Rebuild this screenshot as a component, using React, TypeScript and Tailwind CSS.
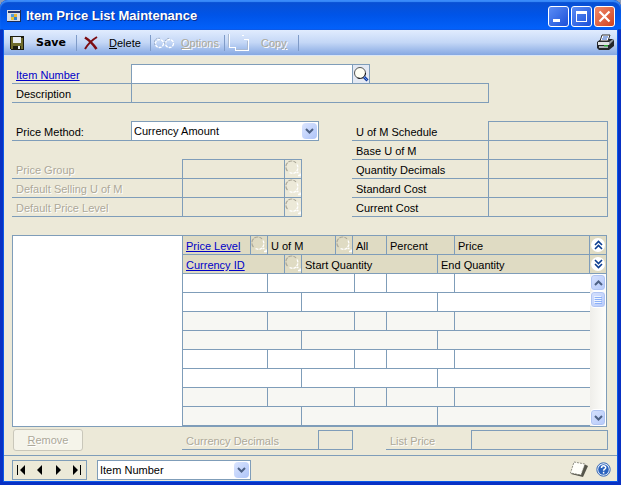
import React, { useState } from "react";

const line = "border-[#7f9db9]";

function Lens({ disabled = false }: { disabled?: boolean }) {
  return (
    <svg width="16" height="18" viewBox="0 0 16 18" fill="none" aria-hidden="true">
      {disabled ? (
        <>
          <path d="M12 4.500A6 6 0 0 1 8 13.500L4 12.500" stroke="#fff" strokeWidth="1.300" strokeDasharray="3 1" />
          <path d="M2.500 11A5.500 5.500 0 0 1 11 2.800" stroke="#aca899" strokeWidth="1.200" strokeDasharray="4 1" />
          <path d="M11.500 12.500h2M13 15.500h3M15.200 13.500v2" stroke="#fff" strokeWidth="1.500" />
        </>
      ) : (
        <>
          <circle cx="7" cy="8" r="5.500" fill="#fffff4" stroke="#555" strokeWidth="1" />
          <path d="M12.500 8A5.500 5.500 0 0 1 4 12.500" stroke="#111" strokeDasharray="3 1" />
          <path d="M11 12l3.500 3.500" stroke="#123c9c" strokeWidth="3" />
          <path d="M11 12l3 3" stroke="#5d93ef" strokeWidth="1" />
        </>
      )}
    </svg>
  );
}

function LensButton({ label, disabled = false }: { label: string; disabled?: boolean }) {
  return (
    <button type="button" aria-label={label} disabled={disabled} className={`flex h-full w-4 shrink-0 items-center justify-center ${disabled ? "" : "bg-[#e4e9f3]"}`}>
      <Lens disabled={disabled} />
    </button>
  );
}

function DropDown({ id, label, options, className }: { id: string; label: string; options: string[]; className: string }) {
  return (
    <div className={`relative h-5 border bg-white ${line} ${className}`}>
      <select id={id} aria-label={label} className="block h-[18px] w-full appearance-none bg-transparent pr-5 pl-0.5 text-black outline-none">
        {options.map((o) => (
          <option key={o}>{o}</option>
        ))}
      </select>
      <span className="pointer-events-none absolute top-px right-px flex h-4 w-[15px] items-center justify-center rounded-sm bg-linear-to-br from-[#dbe5fe] to-[#aec4f8]">
        <svg width="9" height="6" viewBox="0 0 9 6" fill="none" aria-hidden="true">
          <path d="M1 1l3.500 3.500L8 1" stroke="#4d6185" strokeWidth="2" />
        </svg>
      </span>
    </div>
  );
}

const emboss = "text-[#aca899] [text-shadow:1px_1px_0_#fff]";

function Divider() {
  return <span className="h-4 w-px shrink-0 bg-[#7f9bc8]" />;
}

function Toolbar() {
  return (
    <div className="flex h-[26px] items-center border-b border-[#dbe6f4] bg-linear-to-b from-[#e1ecfe] via-[#c4d7f6] to-[#86a8e2]">
      <button type="button" className="flex h-6 w-[72px] items-center gap-3 pl-1.5 font-['DejaVu_Sans',sans-serif] text-[11px] font-bold">
        <svg width="14" height="14" viewBox="0 0 14 14" shapeRendering="crispEdges" aria-hidden="true">
          <path d="M0 0h14v14H1l-1-1z" fill="#1c1c10" />
          <path d="M1 1h2v12H1zM11 2h2v11h-2zM2 7h10v3H2z" fill="#6f6c2c" />
          <path d="M3 1h8v6H3z" fill="#e8edf4" />
          <path d="M3 10h8v4H3z" fill="#1c1c10" />
          <path d="M8 10h2v3H8z" fill="#e8edf4" />
        </svg>
        Save
      </button>
      <Divider />
      <button type="button" className="flex h-6 w-[73px] items-center gap-[11px] pl-[7px]">
        <svg width="14" height="14" viewBox="0 0 14 14" fill="none" aria-hidden="true">
          <path d="M1 1.500C5 4 9 8 12.500 13" stroke="#7d0d12" strokeWidth="2.600" />
          <path d="M13 1C8 4 4 8 1 13" stroke="#7d0d12" strokeWidth="2" />
        </svg>
        <span><u>D</u>elete</span>
      </button>
      <Divider />
      <button type="button" disabled className={`flex h-6 w-[73px] items-center gap-1.5 pl-[3px] ${emboss}`}>
        <svg width="21" height="12" viewBox="0 0 21 12" fill="none" aria-hidden="true">
          <circle cx="5.500" cy="6.500" r="4" stroke="#fff" strokeWidth="1.300" strokeDasharray="3 1" />
          <circle cx="15.500" cy="6.500" r="4" stroke="#fff" strokeWidth="1.300" strokeDasharray="3 1" />
          <path d="M1 8A4.300 4.300 0 0 1 6 1.500M11 7A4.300 4.300 0 0 1 16 1.500" stroke="#9aabc4" strokeDasharray="2 1" />
        </svg>
        <span><u>O</u>ptions</span>
      </button>
      <Divider />
      <button type="button" disabled className={`flex h-6 w-[73px] items-center gap-3 pl-[3px] ${emboss}`}>
        <svg width="21" height="18" viewBox="0 0 21 18" fill="none" shapeRendering="crispEdges" aria-hidden="true">
          <path d="M1.500 0v14M1 13.500h6M7.500 13v4M7 16.500h13M20.500 5v12M16 5.500h4M14 1.500h2" stroke="#fff" strokeWidth="1" />
          <path d="M.5 0v13M8 15.500h11M19.500 7v8" stroke="#a9b9d2" />
        </svg>
        <span>Cop<u>y</u></span>
      </button>
      <Divider />
      <button type="button" aria-label="Print" className="mr-0.5 ml-auto flex h-6 w-5 items-center justify-center">
        <svg width="19" height="17" viewBox="0 0 19 17" aria-hidden="true">
          <path d="M1 8l4-3h12l1 2v5l-5 4H3l-2-2z" fill="#24272b" />
          <path d="M6 1h8l-2 6H4z" fill="#fff" stroke="#333" />
          <path d="M7 3h5M6 5h5" stroke="#2b5fc4" />
          <path d="M2 8h11v3H2z" fill="#dfe2e4" />
          <path d="M13 8l4-3v2l-4 4z" fill="#969ca2" />
          <path d="M3 12h9v2H3z" fill="#aab0b6" />
          <path d="M8 11h4v1.500H8z" fill="#2fae35" />
        </svg>
      </button>
    </div>
  );
}

const caption = "flex h-[21px] w-[21px] items-center justify-center rounded-[3px] border border-white";

function TitleBar() {
  return (
    <header className="flex h-[30px] items-center rounded-t-lg bg-linear-to-b from-[#0a4fd0] via-[#0054e8] to-[#0362fc] pt-0.5 pr-1.5 pl-[7px] shadow-[inset_0_2px_1px_#3a8bfa,inset_0_-1px_0_#0347c4]">
      <svg width="14" height="12" viewBox="0 0 14 12" shapeRendering="crispEdges" aria-hidden="true">
        <path d="M0 0h14v12H0z" fill="#1c2c54" />
        <path d="M0 0h13v11H0z" fill="#d8dde4" />
        <path d="M1 1h12v2H1z" fill="#25386e" />
        <path d="M4 4h3v3H4z" fill="#4f9be0" />
        <path d="M7 4h3v3H7z" fill="#e9b62f" />
        <path d="M4 7h3v3H4z" fill="#e2c23b" />
        <path d="M7 7h3v3H7z" fill="#2f80cc" />
      </svg>
      <h1 className="ml-[5px] text-[13px] font-bold text-white [text-shadow:1px_1px_0_#0a2c8c]">Item Price List Maintenance</h1>
      <div className="ml-auto flex gap-0.5">
        <button type="button" aria-label="Minimize" className={`${caption} bg-linear-to-br from-[#5b8cf5] to-[#1c4fd8]`}>
          <svg width="13" height="13" aria-hidden="true"><path d="M1 9h7v3H1z" fill="#fff" /></svg>
        </button>
        <button type="button" aria-label="Maximize" className={`${caption} bg-linear-to-br from-[#5b8cf5] to-[#1c4fd8]`}>
          <svg width="13" height="13" fill="none" shapeRendering="crispEdges" aria-hidden="true"><path d="M1.500 1.500h10v10h-10z" stroke="#fff" /><path d="M1 1h11v3H1z" fill="#fff" /></svg>
        </button>
        <button type="button" aria-label="Close" className={`${caption} bg-linear-to-br from-[#f0896a] to-[#d0401a]`}>
          <svg width="13" height="13" fill="none" aria-hidden="true"><path d="M1.500 1.500l10 10M11.500 1.500l-10 10" stroke="#fff" strokeWidth="2.200" /></svg>
        </button>
      </div>
    </header>
  );
}

const fieldLabel = "flex h-[19px] shrink-0 items-center border-b pl-1 pt-0.5";

function Costs() {
  const rows = ["U of M Schedule", "Base U of M", "Quantity Decimals", "Standard Cost", "Current Cost"];
  return (
    <div className="ml-auto w-64 pt-px">
      {rows.map((name, i) => (
        <div key={name} className="flex">
          <label htmlFor={`cost-${i}`} className={`${fieldLabel} ${line} w-[136px]`}>{name}</label>
          <input id={`cost-${i}`} readOnly className={`w-[120px] border-x border-b bg-transparent px-1 outline-none ${line} ${i === 0 ? "-mt-px h-5 border-t" : "h-[19px]"}`} />
        </div>
      ))}
    </div>
  );
}

function Defaults() {
  const rows = ["Price Group", "Default Selling U of M", "Default Price Level"];
  return (
    <div className="mt-[19px]">
      {rows.map((name, i) => (
        <div key={name} className="flex">
          <label htmlFor={`default-${i}`} className={`${fieldLabel} ${line} ${emboss} w-[170px]`}>{name}</label>
          <div className={`flex w-[120px] border-x border-b ${line} ${i === 0 ? "-mt-px h-5 border-t" : "h-[19px]"}`}>
            <input id={`default-${i}`} disabled className="w-[101px] bg-transparent px-1" />
            <span className={`border-l ${line}`}><LensButton disabled label={`Look up ${name}`} /></span>
          </div>
        </div>
      ))}
    </div>
  );
}

const head = `border-r border-b ${line} p-0 pl-[3px] pt-0.5 text-left font-normal`;
const lensHead = `h-[19px] border-r border-b ${line} p-0`;
const cell = `h-[19px] border-b ${line} p-0`;
const cellInput = "block h-[18px] w-full bg-transparent px-1 outline-none";

function PriceRows({ shaded, index }: { shaded: boolean; index: number }) {
  const first = [["Price Level", 2], ["U of M", 5], ["All", 1], ["Percent", 2], ["Price", 1]] as const;
  const second = [["Currency ID", 4], ["Start Quantity", 5], ["End Quantity", 2]] as const;
  return (
    <>
      {[first, second].map((cells, r) => (
        <tr key={r} className={shaded ? "bg-[#f7f7f3]" : "bg-white"}>
          {cells.map(([name, span], c) => (
            <td key={name} colSpan={span} className={`${cell} ${c < cells.length - 1 ? "border-r" : ""}`}>
              <input aria-label={`${name}, line ${index + 1}`} className={cellInput} />
            </td>
          ))}
        </tr>
      ))}
    </>
  );
}

function PriceTable() {
  return (
    <table className="min-w-0 flex-1 table-fixed border-separate border-spacing-0">
      <colgroup>
        <col className="w-[68px]" />
        <col className="w-[17px]" />
        <col className="w-[17px]" />
        <col className="w-[17px]" />
        <col className="w-[34px]" />
        <col className="w-[17px]" />
        <col className="w-[2px]" />
        <col className="w-[32px]" />
        <col className="w-[51px]" />
        <col className="w-[17px]" />
        <col />
      </colgroup>
      <thead className="bg-[#dfdbc3]">
        <tr className="h-[19px]">
          <th className={head}><a href="#price-level" className="text-[#0000c8] underline">Price Level</a></th>
          <th className={`border-l ${lensHead} border-l-0`}><LensButton disabled label="Look up Price Level" /></th>
          <th colSpan={3} className={head}>U of M</th>
          <th className={lensHead}><LensButton disabled label="Look up U of M" /></th>
          <th colSpan={2} className={head}>All</th>
          <th colSpan={2} className={head}>Percent</th>
          <th className={head}>Price</th>
        </tr>
        <tr className="h-[19px]">
          <th colSpan={3} className={head}><a href="#currency" className="text-[#0000c8] underline">Currency ID</a></th>
          <th className={lensHead}><LensButton disabled label="Look up Currency ID" /></th>
          <th colSpan={5} className={head}>Start Quantity</th>
          <th colSpan={2} className={head}>End Quantity</th>
        </tr>
      </thead>
      <tbody>
        {[0, 1, 2, 3].map((i) => (
          <PriceRows key={i} index={i} shaded={i % 2 === 1} />
        ))}
      </tbody>
    </table>
  );
}

function ExpandButton({ up }: { up: boolean }) {
  return (
    <button type="button" aria-label={up ? "Collapse lines" : "Expand lines"} className={`flex h-[19px] w-4 items-center justify-center border-b bg-[#dfdbc3] ${line}`}>
      <span className="flex h-3.5 w-3.5 items-center justify-center rounded-full bg-white">
        <svg width="9" height="10" viewBox="0 0 9 10" fill="none" stroke="#0b3d91" strokeWidth="1.600" aria-hidden="true">
          {up ? <path d="M1 5l3.500-3.500L8 5M1 9l3.500-3.500L8 9" /> : <path d="M1 1l3.500 3.500L8 1M1 5l3.500 3.500L8 5" />}
        </svg>
      </span>
    </button>
  );
}

const scrollPart = "flex h-[17px] w-4 items-center justify-center rounded-sm border border-white bg-linear-to-br from-[#d6e1fd] to-[#b6cafa] shadow-[inset_0_0_0_1px_#b0c4f2]";

function ScrollColumn() {
  return (
    <div className="flex w-4 shrink-0 flex-col">
      <ExpandButton up />
      <ExpandButton up={false} />
      <div className="flex flex-1 flex-col bg-linear-to-r from-[#efeeea] to-[#fefefb]">
        <button type="button" aria-label="Scroll up" className={scrollPart}>
          <svg width="9" height="6" fill="none" aria-hidden="true"><path d="M1 5l3.500-3.500L8 5" stroke="#4d6185" strokeWidth="2" /></svg>
        </button>
        <button type="button" aria-label="Scroll thumb" className={scrollPart}>
          <svg width="8" height="8" shapeRendering="crispEdges" aria-hidden="true"><path d="M0 .5h7M0 2.500h7M0 4.500h7M0 6.500h7" stroke="#eef4fe" /><path d="M1 1.500h7M1 3.500h7M1 5.500h7M1 7.500h7" stroke="#8cb0f8" /></svg>
        </button>
        <button type="button" aria-label="Scroll down" className={`${scrollPart} mt-auto`}>
          <svg width="9" height="6" fill="none" aria-hidden="true"><path d="M1 1l3.500 3.500L8 1" stroke="#4d6185" strokeWidth="2" /></svg>
        </button>
      </div>
    </div>
  );
}

function Footer() {
  const moves = [
    ["First record", "M0 0h1v10H0zM8 0v10L3 5z"],
    ["Previous record", "M7 0v10L2 5z"],
    ["Next record", "M2 0v10l5-5z"],
    ["Last record", "M1 0v10l5-5zM8 0h1v10H8z"],
  ];
  return (
    <footer className={`flex h-[26px] items-start border-t pt-1 pr-1.5 pl-2 ${line}`}>
      <nav className={`flex h-5 w-[75px] items-center justify-between border px-1 ${line}`}>
        {moves.map(([name, d]) => (
          <button key={name} type="button" aria-label={name} className="flex h-4 w-[10px] items-center">
            <svg width="9" height="10" aria-hidden="true"><path d={d} /></svg>
          </button>
        ))}
      </nav>
      <DropDown id="sort" label="Sort by" options={["Item Number"]} className="ml-2.5 w-[154px]" />
      <button type="button" aria-label="Note" className="ml-auto flex h-[18px] w-5 items-center justify-center">
        <svg width="18" height="16" viewBox="0 0 18 16" aria-hidden="true">
          <path d="M14 3l4 2-5 11-12-3 1-2z" fill="#55554b" />
          <path d="M4 1l11 2-4 11-10.500-2z" fill="#fffffa" stroke="#77776c" strokeWidth=".8" strokeDasharray="2 1" />
        </svg>
      </button>
      <button type="button" aria-label="Help" className="ml-1.5 flex h-[18px] w-4 items-center justify-center">
        <svg width="15" height="15" viewBox="0 0 15 15" fill="none" aria-hidden="true">
          <circle cx="7.500" cy="7.500" r="6.700" fill="#e8f0fb" stroke="#3567b5" />
          <circle cx="7.500" cy="7.500" r="5.300" fill="#2a62bd" />
          <path d="M5.500 6c0-3 4.300-2.700 4.200-.3 0 1.500-2.100 1.500-2.100 3.100M7.600 9.800v1.600" stroke="#fff" strokeWidth="1.500" />
        </svg>
      </button>
    </footer>
  );
}

export default function App() {
  const [item, setItem] = useState("");
  return (
    <div className="bg-[#8f9bb5] font-['Liberation_Sans',Arial,sans-serif] text-[11px] leading-[14px] text-black">
      <div className="flex min-h-screen flex-col rounded-t-lg bg-[#0831c4]">
        <TitleBar />
        <div className="mx-1 mb-1 flex flex-1 flex-col bg-[#ece9d8] shadow-[0_0_0_1px_#0c59e8]">
          <Toolbar />
          <main className="flex-1 pt-2 pr-[9px] pb-1 pl-2">
            <div className="flex pt-px">
              <label htmlFor="item" className={`${fieldLabel} ${line} w-[119px]`}>
                <a href="#items" className="text-[#0000c8] underline">Item Number</a>
              </label>
              <div className={`-mt-px flex h-5 w-[239px] border ${line}`}>
                <input id="item" value={item} onChange={(e) => setItem(e.target.value)} className="min-w-0 flex-1 bg-white px-1 outline-none" />
                <span className={`border-l ${line}`}><LensButton label="Look up Item Number" /></span>
              </div>
            </div>
            <div className="flex">
              <label htmlFor="description" className={`${fieldLabel} ${line} w-[119px]`}>Description</label>
              <input id="description" readOnly className={`-mt-px h-5 w-[358px] border bg-transparent px-1 outline-none ${line}`} />
            </div>

            <div className="mt-[18px] flex">
              <div>
                <div className="flex pt-px">
                  <label htmlFor="method" className={`${fieldLabel} ${line} w-[119px]`}>Price Method:</label>
                  <DropDown id="method" label="Price Method" options={["Currency Amount"]} className="-mt-px w-[188px]" />
                </div>
                <Defaults />
              </div>
              <Costs />
            </div>

            <div className={`mt-[18px] mr-px flex border-x border-t border-b ${line}`}>
              <div className={`w-[170px] shrink-0 border-r bg-white ${line}`} />
              <PriceTable />
              <ScrollColumn />
            </div>

            <div className="flex items-start pt-0.5">
              <button type="button" disabled className={`ml-px h-[22px] w-[70px] rounded-[3px] border border-[#c9c7ba] bg-[#f5f4ea] ${emboss}`}>
                <u>R</u>emove
              </button>
              <label htmlFor="decimals" className={`${fieldLabel} ${line} ${emboss} mt-0.5 ml-[99px] w-[136px]`}>Currency Decimals</label>
              <input id="decimals" disabled className={`mt-px h-5 w-[35px] border bg-transparent px-1 ${line}`} />
              <label htmlFor="list-price" className={`${fieldLabel} ${line} ${emboss} mt-0.5 ml-[33px] w-[85px]`}>List Price</label>
              <input id="list-price" disabled className={`mt-px h-5 min-w-0 flex-1 border bg-transparent px-1 ${line}`} />
            </div>
          </main>
          <Footer />
        </div>
      </div>
    </div>
  );
}
